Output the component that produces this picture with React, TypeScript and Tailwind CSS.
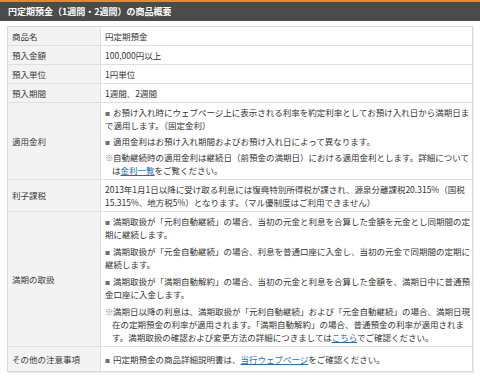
import React from "react";

const font = { fontFamily: '"Noto Sans CJK JP", "Noto Sans", sans-serif' };

function Bullet({ children }: { children: React.ReactNode }) {
  return (
    <div className="whitespace-nowrap">
      <span className="inline-block w-[8px] text-[5px] text-[#707070] align-top leading-[13px]">■</span>
      {children}
    </div>
  );
}

function Note({ first, rest }: { first: React.ReactNode; rest: React.ReactNode[] }) {
  return (
    <div className="whitespace-nowrap">
      <span className="inline-block w-[8px] text-[#888]">※</span>
      {first}
      {rest.map((r, i) => (
        <div key={i} className="pl-[7px]">
          {r}
        </div>
      ))}
    </div>
  );
}

function Row({
  label,
  children,
  gap,
  last,
}: {
  label: string;
  children: React.ReactNode;
  gap?: string;
  last?: boolean;
}) {
  return (
    <div className={`flex ${last ? "min-h-[24px]" : "border-b border-[#dedede]"}`}>
      <div className="w-[93px] shrink-0 bg-[#f3f3f3] border-r border-[#dedede] px-[4px] py-[2.5px] flex items-center text-[#3a3a3a]">
        {label}
      </div>
      <div className={`flex-1 px-[4px] py-[2.5px] flex flex-col justify-center ${gap ?? ""}`}>{children}</div>
    </div>
  );
}

const Link = ({ children }: { children: React.ReactNode }) => (
  <span className="text-[#2a6db5] underline">{children}</span>
);

export default function App() {
  return (
    <div className="w-[480px] h-[377px] bg-white text-[#333] text-[8.5px] leading-[13px]" style={font}>
      <div className="border-t-2 border-[#ea8a1c] bg-[#4b4b4b] h-[21px] flex items-center px-[8px]">
        <span className="text-white font-bold text-[9px]">円定期預金（1週間・2週間）の商品概要</span>
      </div>
      <div className="mx-[7px] mt-[5px] border border-[#d9d9d9] shadow-[1px_1px_0_#ececec]">
        <Row label="商品名">
          <div>円定期預金</div>
        </Row>
        <Row label="預入金額">
          <div>100,000円以上</div>
        </Row>
        <Row label="預入単位">
          <div>1円単位</div>
        </Row>
        <Row label="預入期間">
          <div>1週間、2週間</div>
        </Row>
        <Row label="適用金利" gap="gap-[3px]">
          <Bullet>
            お預け入れ時にウェブページ上に表示される利率を約定利率としてお預け入れ日から満期日ま
            <br />
            で適用します。（固定金利）
          </Bullet>
          <Bullet>適用金利はお預け入れ期間およびお預け入れ日によって異なります。</Bullet>
          <Note
            first="自動継続時の適用金利は継続日（前預金の満期日）における適用金利とします。詳細について"
            rest={[
              <>
                は<Link>金利一覧</Link>をご覧ください。
              </>,
            ]}
          />
        </Row>
        <Row label="利子課税">
          <div className="whitespace-nowrap">
            2013年1月1日以降に受け取る利息には復興特別所得税が課され、源泉分離課税20.315%（国税
            <br />
            15.315%、地方税5%）となります。（マル優制度はご利用できません）
          </div>
        </Row>
        <Row label="満期の取扱" gap="gap-[4px]">
          <Bullet>
            満期取扱が「元利自動継続」の場合、当初の元金と利息を合算した金額を元金とし同期間の定
            <br />
            期に継続します。
          </Bullet>
          <Bullet>
            満期取扱が「元金自動継続」の場合、利息を普通口座に入金し、当初の元金で同期間の定期に
            <br />
            継続します。
          </Bullet>
          <Bullet>
            満期取扱が「満期自動解約」の場合、当初の元金と利息を合算した金額を、満期日中に普通預
            <br />
            金口座に入金します。
          </Bullet>
          <Note
            first="満期日以降の利息は、満期取扱が「元利自動継続」および「元金自動継続」の場合、満期日現"
            rest={[
              "在の定期預金の利率が適用されます。「満期自動解約」の場合、普通預金の利率が適用されま",
              <>
                す。満期取扱の確認および変更方法の詳細につきましては<Link>こちら</Link>でご確認ください。
              </>,
            ]}
          />
        </Row>
        <Row label="その他の注意事項" last>
          <Bullet>
            円定期預金の商品詳細説明書は、<Link>当行ウェブページ</Link>をご確認ください。
          </Bullet>
        </Row>
      </div>
    </div>
  );
}
